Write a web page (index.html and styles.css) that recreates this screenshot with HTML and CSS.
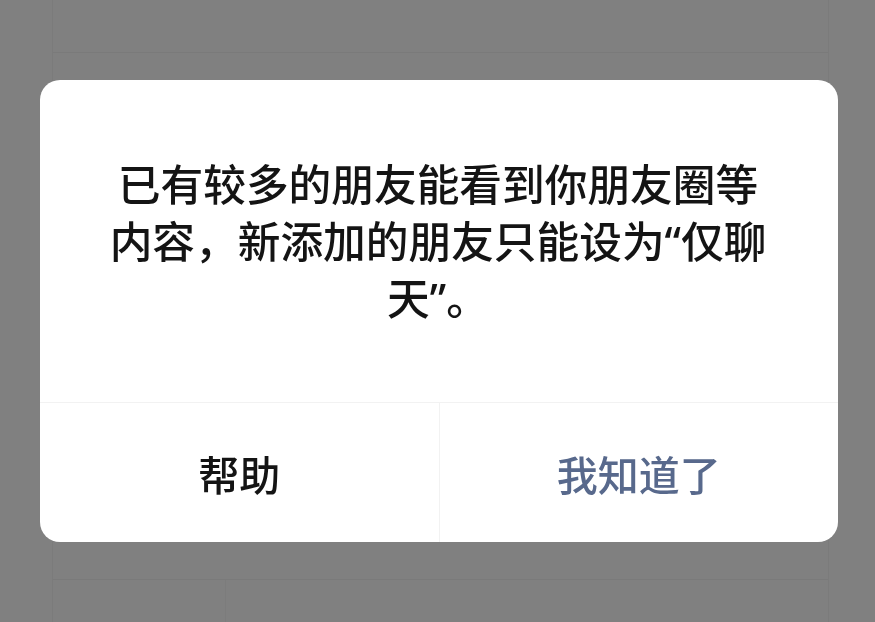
FILE: index.html
```html
<!DOCTYPE html>
<html lang="zh-CN">
<head>
    <meta charset="UTF-8">
    <meta name="viewport" content="width=device-width, initial-scale=1.0">
    <title>提示</title>
    <link rel="stylesheet" href="styles.css">
</head>
<body>
    <!-- 弹窗下方被遮罩盖住的页面 -->
    <div class="page">
        <div class="page-row page-row-top"></div>
        <div class="page-row page-row-main"></div>
        <div class="page-row page-row-bottom">
            <div class="page-cell"></div>
        </div>
    </div>

    <div class="mask">
        <div class="dialog">
            <div class="dialog-body">
                已有较多的朋友能看到你朋友圈等内容，新添加的朋友只能设为“仅聊天”。
            </div>
            <div class="dialog-footer">
                <button class="dialog-btn">帮助</button>
                <button class="dialog-btn dialog-btn-primary">我知道了</button>
            </div>
        </div>
    </div>
</body>
</html>
```

FILE: styles.css
```css
body {
    margin: 0;
    height: 100vh;
    overflow: hidden;
    background-color: #808080;
    font-family: 'Noto Sans', 'Noto Sans CJK SC', sans-serif;
}

.page {
    height: 100%;
    margin: 0 46px 0 52px;
    border-left: 1px solid #7b7b7b;
    border-right: 1px solid #7b7b7b;
    display: flex;
    flex-direction: column;
}

.page-row {
    border-bottom: 1px solid #7a7a7a;
}

.page-row-top {
    height: 52px;
}

.page-row-main {
    height: 526px;
}

.page-row-bottom {
    flex: 1;
    border-bottom: none;
    display: flex;
}

.page-cell {
    width: 172px;
    border-right: 1px solid #7c7c7c;
}

.mask {
    position: fixed;
    inset: 0;
    display: flex;
    align-items: center;
    justify-content: center;
}

.dialog {
    width: 798px;
    margin-left: 3px;
    background-color: #fff;
    border-radius: 20px;
    overflow: hidden;
}

.dialog-body {
    height: 323px;
    box-sizing: border-box;
    padding: 76px 60px 0 58px;
    font-size: 42.7px;
    font-weight: 500;
    line-height: 57px;
    color: #141414;
    text-align: center;
    border-bottom: 1px solid #f2f2f2;
}

.dialog-footer {
    display: flex;
    height: 139px;
}

.dialog-btn {
    flex: 1;
    border: none;
    background: none;
    padding: 0;
    font-family: inherit;
    font-size: 41px;
    font-weight: 500;
    color: #141414;
}

.dialog-btn + .dialog-btn {
    border-left: 1px solid #f2f2f2;
}

.dialog-btn-primary {
    color: #58698c;
}
```
